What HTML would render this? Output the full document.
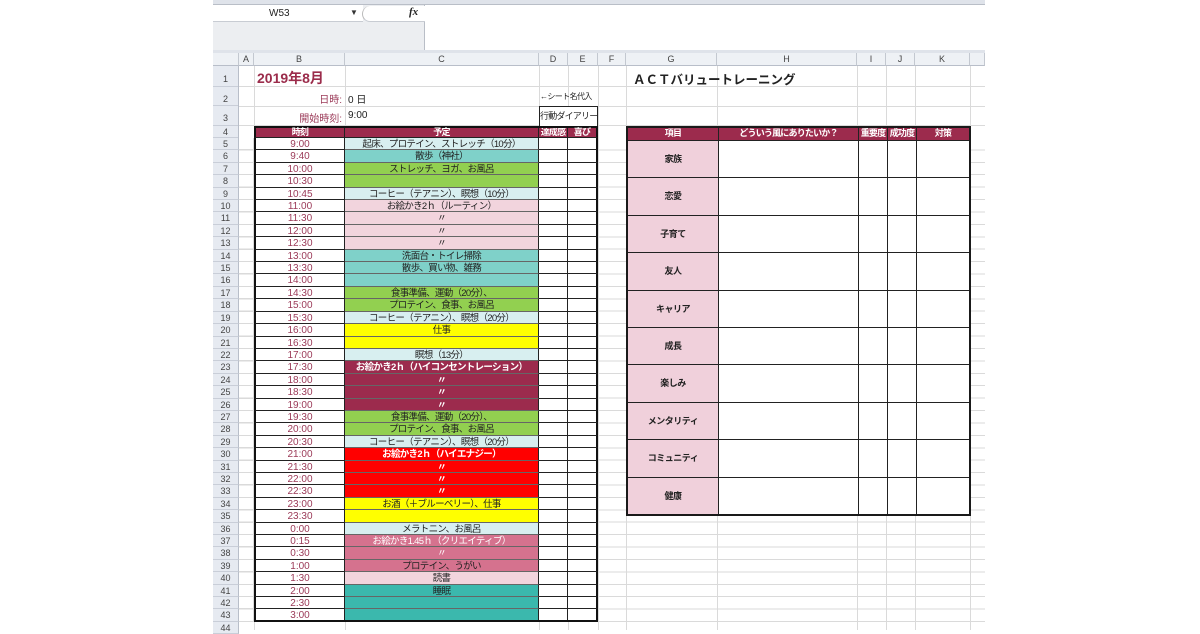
<!DOCTYPE html>
<html><head><meta charset="utf-8"><style>
*{margin:0;padding:0;box-sizing:border-box}
body{width:1200px;height:630px;background:#fff;position:relative;overflow:hidden;font-family:"Liberation Sans","Noto Sans CJK JP",sans-serif;font-size:10px;color:#222}
.a{position:absolute}
.rows{position:absolute;left:213px;top:138px;width:385px}
.r{display:flex;height:12.41px;line-height:13px}
.r div{height:100%;overflow:hidden;white-space:nowrap}
.n{width:26px;background:#e6eaf1;color:#444;font-size:9px;text-align:center;border-bottom:1px solid #c9ced8;border-right:1px solid #b8bec9;line-height:12px!important}
.ca{width:15px;border-bottom:1px solid #dadada;border-right:1px solid #dadada}
.cb{width:91px;text-align:center;color:#9b3a58;border-bottom:1px solid #222;border-left:2px solid #111;border-right:1px solid #222;background:#fff}
.cc{width:194px;text-align:center;border-bottom:1px solid #666;border-right:1px solid #222;font-size:9.5px;letter-spacing:-0.7px}
.cd{width:29px;border-bottom:1px solid #222;border-right:1px solid #222;background:#fff}
.ce{width:30px;border-bottom:1px solid #222;border-right:2px solid #111;background:#fff}
.lc{background:#d8eff0}.tl{background:#7fd1c9}.gr{background:#92d050}.pk{background:#f2d4dd}.ye{background:#ffff00}
.mr{background:#9c2b4d;color:#fff;font-weight:bold}.rd{background:#ff0000;color:#fff;font-weight:bold}.ro{background:#d5728e;color:#fff}.dt{background:#3bb8ad}
.ch{position:absolute;top:53px;height:13px;background:#eef1f5;border-right:1px solid #c3c8d0;border-bottom:1px solid #b8bec9;font-size:9px;color:#444;text-align:center;line-height:13px}
.rt{position:absolute;left:626px;top:126px;width:345px;border:2px solid #1a1a1a;background:#fff}
.rh{display:flex;height:12px;background:#9c2b4d;color:#fff;font-weight:bold;font-size:9px;letter-spacing:-0.8px;line-height:11px;text-align:center;white-space:nowrap}
.rh div{overflow:hidden}
.rr{display:flex;height:37.4px;border-top:1px solid #222}
.rr div,.rh div{border-right:1px solid #222}
.g{width:91px;background:#f0d0db;font-weight:bold;font-size:9px;letter-spacing:-0.5px;text-align:center;line-height:37px}
.h{width:140px}.i{width:29px}.j{width:29px}.k{width:52px;border-right:none!important}
</style></head><body>
<div class="a" style="left:213px;top:0;width:772px;height:5px;background:#dfe3ea;border-bottom:1px solid #b9bec7"></div>
<div class="a" style="left:213px;top:5px;width:212px;height:45px;background:#eceef1;border-right:1px solid #b9bec7"></div>
<div class="a" style="left:213px;top:5px;width:150px;height:17px;background:#fff;border-bottom:1px solid #c8ccd3;font-size:10px;line-height:17px;padding-left:56px">W53</div>
<div class="a" style="left:350px;top:8px;font-size:8px;color:#333">▼</div>
<div class="a" style="left:362px;top:6px;width:63px;height:16px;background:#fff;border-bottom:1px solid #c8ccd3;border-left:1px solid #bbb;border-radius:8px 0 0 8px"></div>
<div class="a" style="left:409px;top:6px;font-family:'Liberation Serif',serif;font-style:italic;font-weight:bold;font-size:11px">fx</div>
<div class="a" style="left:213px;top:50px;width:772px;height:3px;background:#dfe3ea"></div>
<div class="ch" style="left:213px;width:26px"></div>
<div class="ch" style="left:239px;width:15px">A</div>
<div class="ch" style="left:254px;width:91px">B</div>
<div class="ch" style="left:345px;width:194px">C</div>
<div class="ch" style="left:539px;width:29px">D</div>
<div class="ch" style="left:568px;width:30px">E</div>
<div class="ch" style="left:598px;width:28px">F</div>
<div class="ch" style="left:626px;width:91px">G</div>
<div class="ch" style="left:717px;width:140px">H</div>
<div class="ch" style="left:857px;width:29px">I</div>
<div class="ch" style="left:886px;width:29px">J</div>
<div class="ch" style="left:915px;width:55px">K</div>
<div class="ch" style="left:970px;width:15px"></div>
<div class="a" style="left:239px;top:66px;width:746px;height:564px;background:
linear-gradient(#dadada,#dadada) 15px 0/1px 100% no-repeat,
linear-gradient(#dadada,#dadada) 106px 0/1px 100% no-repeat,
linear-gradient(#dadada,#dadada) 300px 0/1px 100% no-repeat,
linear-gradient(#dadada,#dadada) 329px 0/1px 100% no-repeat,
linear-gradient(#dadada,#dadada) 359px 0/1px 100% no-repeat,
linear-gradient(#dadada,#dadada) 387px 0/1px 100% no-repeat,
linear-gradient(#dadada,#dadada) 478px 0/1px 100% no-repeat,
linear-gradient(#dadada,#dadada) 618px 0/1px 100% no-repeat,
linear-gradient(#dadada,#dadada) 647px 0/1px 100% no-repeat,
linear-gradient(#dadada,#dadada) 676px 0/1px 100% no-repeat,
linear-gradient(#dadada,#dadada) 731px 0/1px 100% no-repeat,
linear-gradient(#dadada,#dadada) 0 20px/100% 1px no-repeat,
linear-gradient(#dadada,#dadada) 0 40px/100% 1px no-repeat,
linear-gradient(#dadada,#dadada) 0 59px/100% 1px no-repeat,
repeating-linear-gradient(to bottom,transparent 0,transparent 11.41px,#dadada 11.41px,#dadada 12.41px) 0 72px/100% 100% no-repeat"></div>
<div class="a" style="left:213px;top:66px;width:26px;height:72px;background:#e6eaf1;border-right:1px solid #b8bec9;font-size:9px;color:#444;text-align:center">
<div style="height:21px;line-height:26px;border-bottom:1px solid #c9ced8">1</div>
<div style="height:19px;line-height:24px;border-bottom:1px solid #c9ced8">2</div>
<div style="height:20px;line-height:24px;border-bottom:1px solid #c9ced8">3</div>
<div style="height:12px;line-height:12px;border-bottom:1px solid #c9ced8">4</div></div>
<div class="a" style="left:257px;top:68px;font-size:14px;font-weight:bold;color:#9b2c4b">2019年8月</div>
<div class="a" style="left:254px;top:91px;width:88px;text-align:right;color:#9b3a58">日時:</div>
<div class="a" style="left:348px;top:91px">0 日</div>
<div class="a" style="left:254px;top:110px;width:88px;text-align:right;color:#9b3a58">開始時刻:</div>
<div class="a" style="left:348px;top:110px">9:00</div>
<div class="a" style="left:540px;top:91px;font-size:8px;letter-spacing:-0.6px">←シート名代入</div>
<div class="a" style="left:539px;top:106px;width:59px;height:21px;border:1px solid #222;font-size:9px;letter-spacing:-0.8px;line-height:19px;text-align:center;background:#fff;white-space:nowrap">行動ダイアリー</div>
<div class="a" style="left:633px;top:69px;font-size:12.5px;font-weight:bold">ＡＣＴバリュートレーニング</div>
<div class="a" style="left:254px;top:126px;width:344px;height:12px;background:#9c2b4d;border:2px solid #111;border-bottom:1px solid #222;color:#fff;font-weight:bold;font-size:9px;letter-spacing:-0.8px;line-height:9px;display:flex;text-align:center;white-space:nowrap">
<div style="width:89px;border-right:1px solid #222">時刻</div><div style="width:194px;border-right:1px solid #222">予定</div><div style="width:29px;border-right:1px solid #222;overflow:hidden">達成感</div><div style="width:28px">喜び</div></div>
<div class="rows">
<div class="r"><div class="n">5</div><div class="ca"></div><div class="cb">9:00</div><div class="cc lc">起床、プロテイン、ストレッチ（10分）</div><div class="cd"></div><div class="ce"></div></div>
<div class="r"><div class="n">6</div><div class="ca"></div><div class="cb">9:40</div><div class="cc tl">散歩（神社）</div><div class="cd"></div><div class="ce"></div></div>
<div class="r"><div class="n">7</div><div class="ca"></div><div class="cb">10:00</div><div class="cc gr">ストレッチ、ヨガ、お風呂</div><div class="cd"></div><div class="ce"></div></div>
<div class="r"><div class="n">8</div><div class="ca"></div><div class="cb">10:30</div><div class="cc gr"></div><div class="cd"></div><div class="ce"></div></div>
<div class="r"><div class="n">9</div><div class="ca"></div><div class="cb">10:45</div><div class="cc lc">コーヒー（テアニン）、瞑想（10分）</div><div class="cd"></div><div class="ce"></div></div>
<div class="r"><div class="n">10</div><div class="ca"></div><div class="cb">11:00</div><div class="cc pk">お絵かき2ｈ（ルーティン）</div><div class="cd"></div><div class="ce"></div></div>
<div class="r"><div class="n">11</div><div class="ca"></div><div class="cb">11:30</div><div class="cc pk">〃</div><div class="cd"></div><div class="ce"></div></div>
<div class="r"><div class="n">12</div><div class="ca"></div><div class="cb">12:00</div><div class="cc pk">〃</div><div class="cd"></div><div class="ce"></div></div>
<div class="r"><div class="n">13</div><div class="ca"></div><div class="cb">12:30</div><div class="cc pk">〃</div><div class="cd"></div><div class="ce"></div></div>
<div class="r"><div class="n">14</div><div class="ca"></div><div class="cb">13:00</div><div class="cc tl">洗面台・トイレ掃除</div><div class="cd"></div><div class="ce"></div></div>
<div class="r"><div class="n">15</div><div class="ca"></div><div class="cb">13:30</div><div class="cc tl">散歩、買い物、雑務</div><div class="cd"></div><div class="ce"></div></div>
<div class="r"><div class="n">16</div><div class="ca"></div><div class="cb">14:00</div><div class="cc tl"></div><div class="cd"></div><div class="ce"></div></div>
<div class="r"><div class="n">17</div><div class="ca"></div><div class="cb">14:30</div><div class="cc gr">食事準備、運動（20分）、</div><div class="cd"></div><div class="ce"></div></div>
<div class="r"><div class="n">18</div><div class="ca"></div><div class="cb">15:00</div><div class="cc gr">プロテイン、食事、お風呂</div><div class="cd"></div><div class="ce"></div></div>
<div class="r"><div class="n">19</div><div class="ca"></div><div class="cb">15:30</div><div class="cc lc">コーヒー（テアニン）、瞑想（20分）</div><div class="cd"></div><div class="ce"></div></div>
<div class="r"><div class="n">20</div><div class="ca"></div><div class="cb">16:00</div><div class="cc ye">仕事</div><div class="cd"></div><div class="ce"></div></div>
<div class="r"><div class="n">21</div><div class="ca"></div><div class="cb">16:30</div><div class="cc ye"></div><div class="cd"></div><div class="ce"></div></div>
<div class="r"><div class="n">22</div><div class="ca"></div><div class="cb">17:00</div><div class="cc lc">瞑想（13分）</div><div class="cd"></div><div class="ce"></div></div>
<div class="r"><div class="n">23</div><div class="ca"></div><div class="cb">17:30</div><div class="cc mr">お絵かき2ｈ（ハイコンセントレーション）</div><div class="cd"></div><div class="ce"></div></div>
<div class="r"><div class="n">24</div><div class="ca"></div><div class="cb">18:00</div><div class="cc mr">〃</div><div class="cd"></div><div class="ce"></div></div>
<div class="r"><div class="n">25</div><div class="ca"></div><div class="cb">18:30</div><div class="cc mr">〃</div><div class="cd"></div><div class="ce"></div></div>
<div class="r"><div class="n">26</div><div class="ca"></div><div class="cb">19:00</div><div class="cc mr">〃</div><div class="cd"></div><div class="ce"></div></div>
<div class="r"><div class="n">27</div><div class="ca"></div><div class="cb">19:30</div><div class="cc gr">食事準備、運動（20分）、</div><div class="cd"></div><div class="ce"></div></div>
<div class="r"><div class="n">28</div><div class="ca"></div><div class="cb">20:00</div><div class="cc gr">プロテイン、食事、お風呂</div><div class="cd"></div><div class="ce"></div></div>
<div class="r"><div class="n">29</div><div class="ca"></div><div class="cb">20:30</div><div class="cc lc">コーヒー（テアニン）、瞑想（20分）</div><div class="cd"></div><div class="ce"></div></div>
<div class="r"><div class="n">30</div><div class="ca"></div><div class="cb">21:00</div><div class="cc rd">お絵かき2ｈ（ハイエナジー）</div><div class="cd"></div><div class="ce"></div></div>
<div class="r"><div class="n">31</div><div class="ca"></div><div class="cb">21:30</div><div class="cc rd">〃</div><div class="cd"></div><div class="ce"></div></div>
<div class="r"><div class="n">32</div><div class="ca"></div><div class="cb">22:00</div><div class="cc rd">〃</div><div class="cd"></div><div class="ce"></div></div>
<div class="r"><div class="n">33</div><div class="ca"></div><div class="cb">22:30</div><div class="cc rd">〃</div><div class="cd"></div><div class="ce"></div></div>
<div class="r"><div class="n">34</div><div class="ca"></div><div class="cb">23:00</div><div class="cc ye">お酒（＋ブルーベリー）、仕事</div><div class="cd"></div><div class="ce"></div></div>
<div class="r"><div class="n">35</div><div class="ca"></div><div class="cb">23:30</div><div class="cc ye"></div><div class="cd"></div><div class="ce"></div></div>
<div class="r"><div class="n">36</div><div class="ca"></div><div class="cb">0:00</div><div class="cc lc">メラトニン、お風呂</div><div class="cd"></div><div class="ce"></div></div>
<div class="r"><div class="n">37</div><div class="ca"></div><div class="cb">0:15</div><div class="cc ro">お絵かき1.45ｈ（クリエイティブ）</div><div class="cd"></div><div class="ce"></div></div>
<div class="r"><div class="n">38</div><div class="ca"></div><div class="cb">0:30</div><div class="cc ro">〃</div><div class="cd"></div><div class="ce"></div></div>
<div class="r"><div class="n">39</div><div class="ca"></div><div class="cb">1:00</div><div class="cc ro" style="color:#222">プロテイン、うがい</div><div class="cd"></div><div class="ce"></div></div>
<div class="r"><div class="n">40</div><div class="ca"></div><div class="cb">1:30</div><div class="cc pk">読書</div><div class="cd"></div><div class="ce"></div></div>
<div class="r"><div class="n">41</div><div class="ca"></div><div class="cb">2:00</div><div class="cc dt">睡眠</div><div class="cd"></div><div class="ce"></div></div>
<div class="r"><div class="n">42</div><div class="ca"></div><div class="cb">2:30</div><div class="cc dt"></div><div class="cd"></div><div class="ce"></div></div>
<div class="r"><div class="n">43</div><div class="ca"></div><div class="cb">3:00</div><div class="cc dt"></div><div class="cd"></div><div class="ce"></div></div>
<div class="r"><div class="n">44</div></div>
</div>
<div class="a" style="left:254px;top:620px;width:344px;height:2px;background:#111"></div>
<div class="rt">
<div class="rh"><div style="width:91px">項目</div><div class="h">どういう風にありたいか？</div><div class="i">重要度</div><div class="j">成功度</div><div class="k">対策</div></div>
<div class="rr"><div class="g">家族</div><div class="h"></div><div class="i"></div><div class="j"></div><div class="k"></div></div>
<div class="rr"><div class="g">恋愛</div><div class="h"></div><div class="i"></div><div class="j"></div><div class="k"></div></div>
<div class="rr"><div class="g">子育て</div><div class="h"></div><div class="i"></div><div class="j"></div><div class="k"></div></div>
<div class="rr"><div class="g">友人</div><div class="h"></div><div class="i"></div><div class="j"></div><div class="k"></div></div>
<div class="rr"><div class="g">キャリア</div><div class="h"></div><div class="i"></div><div class="j"></div><div class="k"></div></div>
<div class="rr"><div class="g">成長</div><div class="h"></div><div class="i"></div><div class="j"></div><div class="k"></div></div>
<div class="rr"><div class="g">楽しみ</div><div class="h"></div><div class="i"></div><div class="j"></div><div class="k"></div></div>
<div class="rr"><div class="g">メンタリティ</div><div class="h"></div><div class="i"></div><div class="j"></div><div class="k"></div></div>
<div class="rr"><div class="g">コミュニティ</div><div class="h"></div><div class="i"></div><div class="j"></div><div class="k"></div></div>
<div class="rr"><div class="g">健康</div><div class="h"></div><div class="i"></div><div class="j"></div><div class="k"></div></div>
</div>
</body></html>
